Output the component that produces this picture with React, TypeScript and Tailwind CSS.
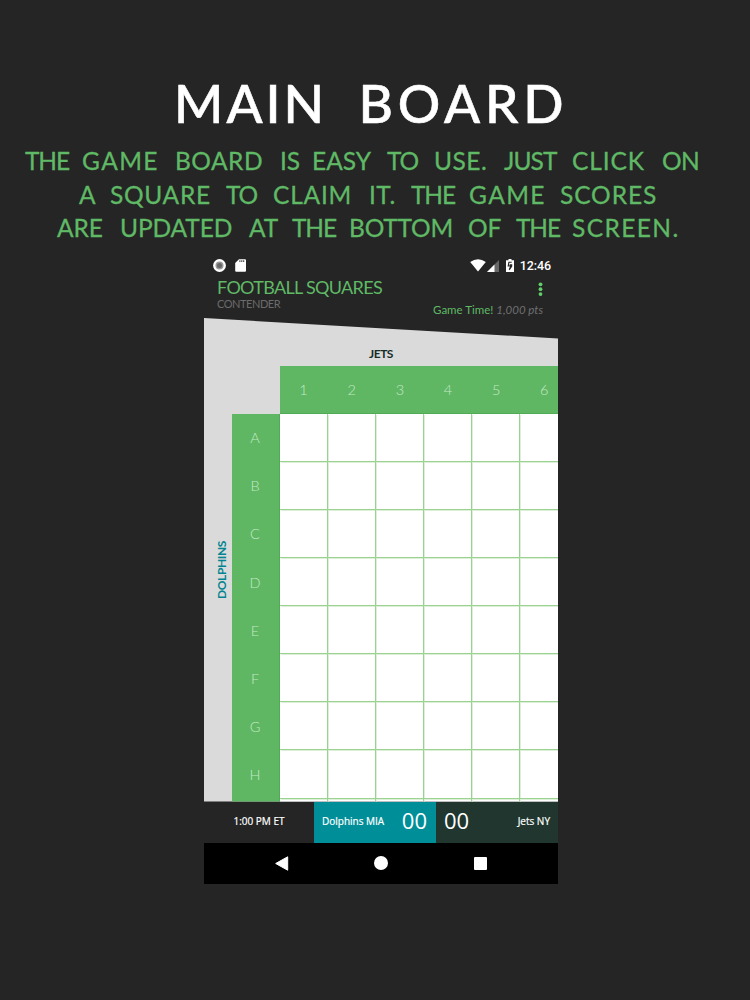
const columns = ['1', '2', '3', '4', '5', '6'];
const rows = ['A', 'B', 'C', 'D', 'E', 'F', 'G', 'H'];

// Each entry is a word with the advance and tracking it is set with.
const lineOne = [
  ['THE', 'w-[57px] tracking-[-1.1px]'],
  ['GAME', 'w-[93px] tracking-[1.4px]'],
  ['BOARD', 'w-[105px] tracking-[0.5px]'],
  ['IS', 'w-[32px] tracking-[0px]'],
  ['EASY', 'w-[75px] tracking-[0px]'],
  ['TO', 'w-[47px] tracking-[-1.2px]'],
  ['USE.', 'w-[70px] tracking-[0.5px]'],
  ['JUST', 'w-[68px] tracking-[-0.9px]'],
  ['CLICK', 'w-[90px] tracking-[0.9px]'],
  ['ON', 'w-[40px] tracking-[-0.5px]'],
];
const lineTwo = [
  ['A', 'w-[31px]'],
  ['SQUARE', 'w-[116px] tracking-[0.7px]'],
  ['TO', 'w-[47px] tracking-[-1.2px]'],
  ['CLAIM', 'w-[96px] tracking-[0.8px]'],
  ['IT.', 'w-[42px] tracking-[0.5px]'],
  ['THE', 'w-[58px] tracking-[-1.1px]'],
  ['GAME', 'w-[91px] tracking-[1.4px]'],
  ['SCORES', 'w-[100px] tracking-[0.9px]'],
];
const lineThree = [
  ['ARE', 'w-[63px] tracking-[-0.1px]'],
  ['UPDATED', 'w-[129px] tracking-[-0.1px]'],
  ['AT', 'w-[43px] tracking-[0px]'],
  ['THE', 'w-[57px] tracking-[-1.1px]'],
  ['BOTTOM', 'w-[119px] tracking-[-0.2px]'],
  ['OF', 'w-[48px] tracking-[0px]'],
  ['THE', 'w-[56px] tracking-[-1.1px]'],
  ['SCREEN.', 'w-[112px] tracking-[1.4px]'],
];

function Line({ words, className }: { words: string[][]; className: string }) {
  return (
    <p className={className}>
      {words.map(([word, style], i) => (
        <span key={i} className={`inline-block ${style}`}>
          {word}{' '}
        </span>
      ))}
    </p>
  );
}

function StatusBar() {
  return (
    <div className="flex h-[27px] items-center pl-[9px] pr-[7px] pt-[4px] font-[Roboto,sans-serif] text-white">
      <svg className="size-[13px]" viewBox="0 0 13 13">
        <circle cx="6.5" cy="6.5" r="6.4" fill="#fff" />
        <circle cx="6.5" cy="6.5" r="4" fill="#999" />
        <circle cx="6.5" cy="6.5" r="2.5" fill="#666" />
      </svg>
      <svg className="ml-[9px] h-[13px] w-[11px]" viewBox="0 0 11 13">
        <path d="M4 .2h6q1 0 1 1v10.6q0 1-1 1H1.2q-1 0-1-1V4Z" fill="#fff" />
        <path d="M4.4 1.3h1v1.8h-1zm1.9 0h1v1.8h-1zm1.9 0h1v1.8h-1z" fill="#333" />
      </svg>
      <svg className="ml-auto h-[13px] w-[16px]" viewBox="0 0 16 13">
        <path d="M.2 3Q8-2.5 15.8 3L8 12.6Z" fill="#fff" />
      </svg>
      <svg className="ml-[1px] h-[12px] w-[12px]" viewBox="0 0 12 12">
        <path d="M12 0v12H0Z" fill="#686868" />
        <path d="M7.5 4.5V12H0Z" fill="#fff" />
      </svg>
      <svg className="ml-[7px] h-[13px] w-[8px]" viewBox="0 0 8 13">
        <path d="M2.5 0h3v1.2H8V13H0V1.2h2.5Z" fill="#fff" />
        <path d="M5.7 3.3H2.9L2.2 7h2.6L3.2 10.8 5.7 7.4V5.9H3.6" fill="none" stroke="#252525" strokeWidth="1.1" />
      </svg>
      <span className="ml-[6px] text-[12.5px] leading-[14px] font-medium tracking-[-0.1px]">12:46</span>
    </div>
  );
}

function AppHeader() {
  return (
    <header className="flex h-[41px] justify-between pl-[13px] pr-[15px] font-[Lato,sans-serif]">
      <div className="whitespace-nowrap">
        <h2 className="text-[18px] leading-[20px] tracking-[-0.68px] text-[#5fb965]">FOOTBALL SQUARES</h2>
        <p className="text-[11px] leading-[14px] tracking-[-0.45px] text-[#6b6b6b]">CONTENDER</p>
      </div>
      <div className="flex flex-col items-end">
        <svg className="mt-[5px] h-[14px] w-[5px]" viewBox="0 0 5 14">
          <g fill="#5fd069">
            <circle cx="2.5" cy="2.3" r="1.9" />
            <circle cx="2.5" cy="7.2" r="1.9" />
            <circle cx="2.5" cy="12.1" r="1.9" />
          </g>
        </svg>
        <p className="mt-[7px] text-[11.5px] leading-[14px] whitespace-nowrap text-[#5fb965]">
          Game Time! <i className="text-[#707070]">1,000 pts</i>
        </p>
      </div>
    </header>
  );
}

function Board() {
  return (
    <main className="flex h-[483.5px] flex-col bg-[#dadada] font-[Lato,sans-serif] [clip-path:polygon(0_0,100%_20.5px,100%_100%,0_100%)]">
      <div className="h-[47.5px] pt-[29px] text-center text-[12px] leading-[14px] font-bold tracking-[-0.5px] text-[#162c28]">
        JETS
      </div>
      <div className="ml-[75.5px] flex h-[48px] shrink-0 overflow-hidden border-b border-[#4fac54] bg-[#5fb763]">
        {columns.map((c) => (
          <div key={c} className="flex w-[48.15px] shrink-0 items-center justify-center pt-[2px] text-[14.5px] font-light text-[#c4e8c6]">
            {c}
          </div>
        ))}
      </div>
      <div className="flex min-h-0 flex-1">
        <div className="flex w-[27.5px] items-center justify-center">
          <span className="mr-[-8px] mb-[76px] rotate-180 text-[12px] leading-[14px] font-bold tracking-[-0.4px] text-[#028590] [writing-mode:vertical-rl]">
            DOLPHINS
          </span>
        </div>
        <div className="w-[48px] overflow-hidden border-r border-[#4fac54] bg-[#5fb763]">
          {rows.map((r) => (
            <div key={r} className="flex h-[48.15px] items-center justify-center pt-[1px] text-[14.5px] font-light text-[#c4e8c6]">
              {r}
            </div>
          ))}
        </div>
        <div className="flex-1 overflow-hidden bg-white">
          {[...rows, 'I'].map((r) => (
            <div key={r} className="flex h-[48.15px]">
              {columns.map((c) => (
                <div
                  key={c}
                  className="w-[48.15px] shrink-0 border-r border-b border-[#9bd292] shadow-[1px_1px_0_#dcf0d8]"
                />
              ))}
            </div>
          ))}
        </div>
      </div>
    </main>
  );
}

function ScoreBar() {
  return (
    <div className="flex h-[41px] items-center bg-[#252525] font-['Open_Sans',sans-serif] text-[10px] whitespace-nowrap text-white">
      <div className="w-[110px] pb-[2px] text-center [-webkit-text-stroke:0.2px_white]">1:00 PM ET</div>
      <div className="flex h-full w-[122px] items-center justify-between bg-[#008f99] pr-[9px] pb-[3px] pl-[8px]">
        <span className="pt-[2px] [-webkit-text-stroke:0.2px_white]">Dolphins MIA</span>
        <span className="text-[22px]">00</span>
      </div>
      <div className="flex h-full flex-1 items-center justify-between bg-[#20362f] pr-[8px] pb-[3px] pl-[8px]">
        <span className="text-[22px]">00</span>
        <span className="pt-[2px] [-webkit-text-stroke:0.2px_white]">Jets NY</span>
      </div>
    </div>
  );
}

function NavBar() {
  return (
    <nav className="flex h-[41.5px] items-center bg-black pl-[70.5px]">
      <svg className="h-[15px] w-[14px]" viewBox="0 0 14 15">
        <path d="M.7 7.5 12.7.8v13.4Z" fill="#fff" stroke="#fff" strokeLinejoin="round" />
      </svg>
      <div className="ml-[85.5px] size-[14px] rounded-full bg-white" />
      <div className="ml-[86px] size-[13px] rounded-[1px] bg-white" />
    </nav>
  );
}

export default function App() {
  return (
    <div className="h-[1000px] w-[750px] overflow-hidden bg-[#252525]">
      <div className="h-[250px] pt-[70px] font-[Lato,sans-serif] whitespace-nowrap">
        <h1 className="pl-[174px] text-[53px] leading-[66px] font-medium tracking-[3px] text-white [word-spacing:15px] [-webkit-text-stroke:0.6px_white]">
          MAIN <span className="tracking-[4.8px]">BOARD</span>
        </h1>
        <div className="mt-[8px] text-[24.5px] leading-[33.5px] text-[#5fb965] [-webkit-text-stroke:0.3px_#5fb965]">
          <Line words={lineOne} className="flex pl-[25px]" />
          <Line words={lineTwo} className="flex pl-[79px]" />
          <Line words={lineThree} className="flex pl-[57px]" />
        </div>
      </div>
      <section className="ml-[204px] w-[354px]">
        <StatusBar />
        <AppHeader />
        <Board />
        <ScoreBar />
        <NavBar />
      </section>
    </div>
  );
}
